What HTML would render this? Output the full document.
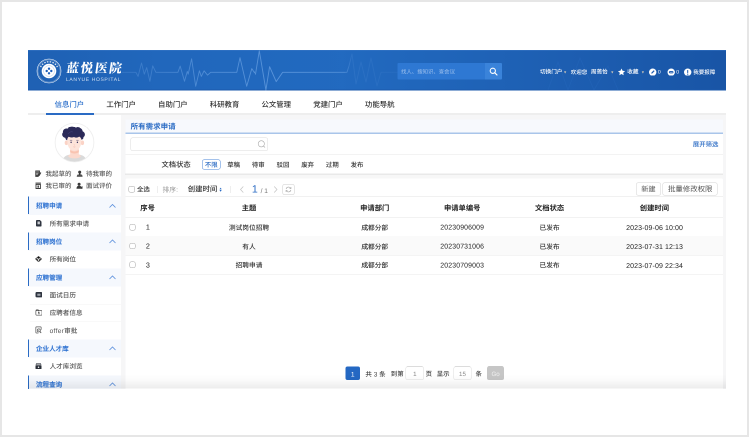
<!DOCTYPE html>
<html lang="zh-CN"><head><meta charset="utf-8"><title>蓝悦医院 - 所有需求申请</title>
<style>
html,body{margin:0;padding:0;}
body{width:749px;height:437px;overflow:hidden;background:#fff;position:relative;font-family:"Liberation Sans","Noto Sans CJK SC",sans-serif;}
.frame{position:absolute;left:0;top:0;width:749px;height:437px;box-sizing:border-box;border:2px solid #e6e6e6;}
.shot{position:absolute;left:28px;top:50px;width:698px;height:338.7px;overflow:hidden;background:#f6f6f7;}
.pg{position:absolute;left:-28px;top:-50px;width:1498px;height:874px;transform:scale(0.5);transform-origin:0 0;will-change:transform;}
.a{position:absolute;display:block;}
.t{position:absolute;white-space:nowrap;line-height:1;text-rendering:geometricPrecision;font-weight:500;}
</style></head><body>
<div class="frame"></div>
<div class="shot"><div class="pg">
<div class="a" style="left:56px;top:100px;width:1396px;height:81.4px;background:linear-gradient(90deg,#1f61b4 0%,#2167bc 18%,#226ac0 45%,#1f62b6 68%,#1955a6 100%);border-top:1.2px solid #3a77c6;border-bottom:2.4px solid #1b59ac;box-sizing:border-box;"></div>
<svg class="a" style="left:56.00px;top:100.00px" width="1396.00" height="81.00" viewBox="0 0 698 40.5">
<defs><linearGradient id="eg" x1="94" y1="0" x2="372" y2="0" gradientUnits="userSpaceOnUse">
<stop offset="0" stop-color="#7fb2ee" stop-opacity="0.22"/><stop offset="0.3" stop-color="#7fb2ee" stop-opacity="0.5"/><stop offset="0.6" stop-color="#7fb2ee" stop-opacity="0.6"/><stop offset="0.8" stop-color="#7fb2ee" stop-opacity="0.5"/><stop offset="0.825" stop-color="#7fb2ee" stop-opacity="0.12"/><stop offset="1" stop-color="#7fb2ee" stop-opacity="0.07"/></linearGradient></defs>
<polyline points="94.0,22.3 107.9,22.3 110.1,26.4 113.5,13.0 116.3,24.2 118.7,17.6 121.9,31.3 124.7,15.8 127.9,22.3 149.9,22.3 152.2,16.1 156.5,31.3 159.3,21.4 160.2,24.2 163.6,8.8 167.7,36.3 171.4,20.8 173.3,26.4 176.1,20.8 179.5,25.1 182.7,22.3 208.8,22.3 212.0,7.7 218.7,36.3 223.8,18.6 227.5,24.2 231.3,0.8 237.9,40.0 241.6,16.7 248.2,31.6 254.7,22.3 319.0,22.3 321.0,16.0 324.0,4.0 328.0,34.0 333.0,12.0 338.0,32.0 343.0,8.0 349.0,36.0 353.0,22.3 372.0,22.3" fill="none" stroke="url(#eg)" stroke-width="0.9" stroke-linejoin="round"/>
<polyline points="520,40 530,12 540,40 552,8 566,40 580,16 590,40" fill="none" stroke="#3a7bd0" stroke-opacity="0.18" stroke-width="0.8"/>
</svg>
<svg class="a" style="left:71.80px;top:115.60px" width="52.00" height="52.00" viewBox="-13 -13 26 26">
<circle r="12" fill="none" stroke="#fff" stroke-width="0.550" opacity="0.950"/>
<circle r="11.100" fill="none" stroke="#fff" stroke-width="0.400" opacity="0.600"/>
<path d="M-8.43 -3.93A9.3 9.3 0 0 1 8.43 -3.93" fill="none" stroke="#fff" stroke-width="1.300" stroke-dasharray="1.500 1.300" opacity="0.850"/>
<circle r="7.300" fill="#fff"/>
<circle r="5.400" fill="none" stroke="#2468c3" stroke-width="0.350" opacity="0.550"/>
<g fill="#1d5fbb"><circle cx="0" cy="-2.300" r="1.200"/><circle cx="0" cy="2.300" r="1.200"/><circle cx="-2.300" cy="0" r="1.200"/><circle cx="2.300" cy="0" r="1.200"/></g>
<circle r="0.800" fill="#fff"/>
</svg>
<div class="t " style="top:123.2px;font-size:25.2px;color:#fff;left:130.6px;font-family:'Noto Serif CJK SC',serif;font-weight:900;letter-spacing:3.4px;transform:skewX(-8deg);transform-origin:0 100%;">蓝悦医院</div>
<div class="t " style="top:155px;font-size:10px;color:rgba(255,255,255,.78);left:132px;letter-spacing:1.24px;font-weight:400;">LANYUE HOSPITAL</div>
<div class="a" style="left:795px;top:126.4px;width:175px;height:32.8px;background:#2e78d3;border-radius:2px 0 0 2px;"></div>
<div class="a" style="left:970px;top:126.4px;width:34px;height:32.8px;background:#3a83da;border-radius:0 2px 2px 0;"></div>
<div class="t " style="top:139px;font-size:10.8px;color:#8db6ea;left:802px;">找人、搜知识、查会议</div>
<svg class="a" style="left:978.00px;top:134.00px" width="18.00" height="18.00" viewBox="0 0 9 9"><circle cx="3.8" cy="3.8" r="2.6" fill="none" stroke="#fff" stroke-width="1.1"/><path d="M5.7 5.7L8 8" stroke="#fff" stroke-width="1.2" stroke-linecap="round"/></svg>
<div class="t " style="top:139.4px;font-size:11.2px;color:#fff;left:1080px;font-weight:500;">切换门户</div>
<div class="t " style="top:141.2px;font-size:7.6px;color:#d6cbb8;left:1126.6px;">▼</div>
<div class="t " style="top:139.5px;font-size:11px;color:#fff;left:1141.4px;font-weight:500;">欢迎您</div>
<div class="t " style="top:139.4px;font-size:11.2px;color:#fff;left:1181.8px;font-weight:500;">周蔫怡</div>
<div class="t " style="top:141.2px;font-size:7.6px;color:#d6cbb8;left:1220.8px;">▼</div>
<svg class="a" style="left:1235.20px;top:136.00px" width="16.00" height="16.00" viewBox="0 0 24 24"><path fill="#fff" d="M12 1.5l3.2 6.9 7.5.9-5.6 5.1 1.5 7.4L12 18.1l-6.6 3.7 1.5-7.4L1.3 9.3l7.5-.9z"/></svg>
<div class="t " style="top:139.4px;font-size:11.2px;color:#fff;left:1254.6px;font-weight:500;">收藏</div>
<div class="t " style="top:141.2px;font-size:7.6px;color:#d6cbb8;left:1282px;">▼</div>
<svg class="a" style="left:1298.00px;top:136.60px" width="14.80" height="14.80" viewBox="0 0 10 10"><circle cx="5" cy="5" r="5" fill="#fff"/><path d="M3 7l.4-1.6L6.4 2.4l1.2 1.2L4.6 6.6z" fill="#1f5db3"/></svg>
<div class="t " style="top:139.5px;font-size:10.2px;color:#fff;left:1315.8px;font-weight:400;">0</div>
<svg class="a" style="left:1334.80px;top:136.60px" width="14.80" height="14.80" viewBox="0 0 10 10"><circle cx="5" cy="5" r="5" fill="#fff"/><rect x="1.900" y="3.400" width="6.200" height="3.200" rx="1.600" fill="#1f5db3"/><circle cx="3.700" cy="5" r="0.500" fill="#fff"/><circle cx="5" cy="5" r="0.500" fill="#fff"/><circle cx="6.300" cy="5" r="0.500" fill="#fff"/></svg>
<div class="t " style="top:139.5px;font-size:10.2px;color:#fff;left:1352.6px;font-weight:400;">0</div>
<svg class="a" style="left:1367.80px;top:136.60px" width="14.80" height="14.80" viewBox="0 0 10 10"><circle cx="5" cy="5" r="5" fill="#fff"/><rect x="4.3" y="2" width="1.4" height="4" rx="0.5" fill="#1f5db3"/><circle cx="5" cy="7.6" r="0.8" fill="#1f5db3"/></svg>
<div class="t " style="top:139.5px;font-size:11px;color:#fff;left:1386.4px;font-weight:500;">我要报障</div>
<div class="a" style="left:56px;top:181.4px;width:1396px;height:44.6px;background:#fff;"></div>
<div class="a" style="left:56px;top:226px;width:1396px;height:4px;background:#eeeeee;"></div>
<div class="a" style="left:91.6px;top:226px;width:96.4px;height:4px;background:#2a6bc4;"></div>
<div class="t " style="top:203.4px;font-size:14.8px;color:#2f72cc;left:109.2px;">信息门户</div>
<div class="t " style="top:203.4px;font-size:14.8px;color:#333;left:212.64px;">工作门户</div>
<div class="t " style="top:203.4px;font-size:14.8px;color:#333;left:316.08px;">自助门户</div>
<div class="t " style="top:203.4px;font-size:14.8px;color:#333;left:419.52px;">科研教育</div>
<div class="t " style="top:203.4px;font-size:14.8px;color:#333;left:522.96px;">公文管理</div>
<div class="t " style="top:203.4px;font-size:14.8px;color:#333;left:626.4px;">党建门户</div>
<div class="t " style="top:203.4px;font-size:14.8px;color:#333;left:729.84px;">功能导航</div>
<div class="a" style="left:56px;top:230px;width:186.4px;height:548px;background:#fff;"></div>
<svg class="a" style="left:109.20px;top:245.20px" width="80.00" height="80.00" viewBox="-20 -20 40 40">
<defs><clipPath id="av"><circle r="19.100"/></clipPath></defs>
<circle r="19.400" fill="#fff" stroke="#ededed" stroke-width="0.800"/>
<g clip-path="url(#av)">
<path d="M-12.500 20C-12 14.500-8 12.300-4 12h8c4 .3 8 2.500 8.500 8z" fill="#dadada"/>
<ellipse cx="0" cy="13.600" rx="6.200" ry="2.300" fill="#fcd9cd"/>
<path d="M-4.300 6h8.600v7.300c0 2.300-8.600 2.300-8.600 0z" fill="#fcd9cd"/>
<path d="M-4.300 7.500c2.600 2 6 2 8.600 0v2.300c-2.600 1.600-6 1.600-8.600 0z" fill="#f9c3b0"/>
<ellipse cx="-8.100" cy="0.300" rx="1.700" ry="2.300" fill="#fbd3c6"/><ellipse cx="7.900" cy="0.300" rx="1.700" ry="2.300" fill="#fbd3c6"/>
<path d="M-7.100 -6h13.800v5.500c0 5-3.200 8.700-6.900 8.700s-6.900-3.700-6.900-8.700z" fill="#fde4da"/>
<path d="M-7.300 -2.200C-8.500 -2.600-9.300 -3.800-9 -5c-3-.6-4.300-3.900-2.500-6.200-.6-3 2.200-5.200 4.800-4.300C-5.300 -18.300-1 -18.600 1.200 -16.300c3.300-1.400 6.800 .7 6.900 3.800 2.700 1.300 3.100 5 .8 6.700 .3 1.400-.6 2.700-2 3-.1-1.700-.9-3-2.200-3.600-1.500 1.300-3.600 1.500-5.200 .4-1.700 .9-3.800 .8-5.300-.2-1 .8-1.500 2.300-1.500 4z" fill="#2b2a58" transform="translate(0,-0.27) scale(1,0.878)"/>
<path d="M-6.500 -8.500c1-1.800 3-2.600 4.800-2" fill="none" stroke="#4a4a80" stroke-width="0.500"/>
<ellipse cx="-3.400" cy="-0.200" rx="0.650" ry="0.800" fill="#3a3560"/><ellipse cx="2.900" cy="-0.200" rx="0.650" ry="0.800" fill="#3a3560"/>
<path d="M-4.600 -2.300h2.300M1.800 -2.300h2.300" stroke="#3a3560" stroke-width="0.450"/>
<path d="M-0.500 1.800q.3 1 .5 1.200" stroke="#f3b6a6" stroke-width="0.500" fill="none"/><path d="M-1.100 4.300q.9 .6 1.900 0" stroke="#f0a89a" stroke-width="0.500" fill="none"/>
</g></svg>
<svg class="a" style="left:70.40px;top:341.00px" width="12.80" height="12.80" viewBox="0 0 6.4 6.4"><path d="M0.300 0h4.600v2.600l-1.300 2.300v1.500H0.300z" fill="#3a3a3a"/><path d="M1.100 1.500h2.800M1.100 2.900h2.300M1.100 4.300h1.800" stroke="#fff" stroke-width="0.500"/><path d="M5.300 1.700l1 .6-1.700 3-1.100 .5 .1-1.200z" fill="#3a3a3a"/></svg>
<div class="t " style="top:340.5px;font-size:13px;color:#585858;left:91px;">我起草的</div>
<svg class="a" style="left:152.60px;top:341.00px" width="12.80" height="12.80" viewBox="0 0 6.4 6.4"><circle cx="3.200" cy="1.600" r="1.500" fill="#3a3a3a"/><path d="M2.600 2.600h1.200l.3 1.500h1.300l.7 1.300H0.300L1 4.100h1.300z" fill="#3a3a3a"/><rect x="0.300" y="5.700" width="5.800" height="0.700" fill="#3a3a3a"/></svg>
<div class="t " style="top:340.5px;font-size:13px;color:#585858;left:172px;">待我审的</div>
<svg class="a" style="left:70.40px;top:365.20px" width="12.80" height="12.80" viewBox="0 0 6.4 6.4"><rect x="0.500" y="0.100" width="5.400" height="1.100" fill="#3a3a3a"/><path d="M1 1.900h4.400v4.100H1z" fill="none" stroke="#3a3a3a" stroke-width="0.900"/><rect x="2.500" y="3" width="1.400" height="2.200" fill="#3a3a3a"/></svg>
<div class="t " style="top:364.9px;font-size:13px;color:#585858;left:91px;">我已审的</div>
<svg class="a" style="left:152.60px;top:365.20px" width="12.80" height="12.80" viewBox="0 0 6.4 6.4"><circle cx="2.600" cy="1.700" r="1.500" fill="#3a3a3a"/><path d="M0 6.300c0-2.200 1.100-3 2.600-3s2.600 .8 2.600 3z" fill="#3a3a3a"/><path d="M4.600 4.400l1.700-.9v2.800H4.600z" fill="#3a3a3a"/></svg>
<div class="t " style="top:364.9px;font-size:13px;color:#585858;left:172px;">面试评价</div>
<div class="a" style="left:56px;top:393.2px;width:186.4px;height:36.4px;background:#f5f8fd;"></div>
<div class="a" style="left:56px;top:393.2px;width:2.2px;height:35.2px;background:#2a6bc4;"></div>
<div class="t " style="top:405.44px;font-size:13.1px;color:#2b70d1;left:72px;font-weight:500;-webkit-text-stroke:0.3px #2b70d1;">招聘申请</div>
<svg class="a" style="left:217.40px;top:403.60px" width="16.00" height="16.00" viewBox="0 0 8 8"><path d="M1 5.500L4 2.500 7 5.500" fill="none" stroke="#5b8fdc" stroke-width="0.800"/></svg>
<svg class="a" style="left:71.80px;top:439.84px" width="11.20" height="13.00" viewBox="0 0 5.6 6.5"><path d="M0.900 0H3.900L5.600 1.700V5.600a.9 .9 0 0 1-.9 .9H0.900a.9 .9 0 0 1-.9-.9V0.900a.9 .9 0 0 1 .9-.9z" fill="#2f3540"/><rect x="1.500" y="1.500" width="2.400" height="2.800" fill="#c9ccd1"/></svg>
<div class="t " style="top:440.64px;font-size:13.2px;color:#555;left:99.2px;">所有需求申请</div>
<div class="a" style="left:56px;top:464.9px;width:186.4px;height:36.4px;background:#f5f8fd;"></div>
<div class="a" style="left:56px;top:464.9px;width:2.2px;height:35.2px;background:#2a6bc4;"></div>
<div class="t " style="top:477.14px;font-size:13.1px;color:#2b70d1;left:72px;font-weight:500;-webkit-text-stroke:0.3px #2b70d1;">招聘岗位</div>
<svg class="a" style="left:217.40px;top:475.30px" width="16.00" height="16.00" viewBox="0 0 8 8"><path d="M1 5.500L4 2.500 7 5.500" fill="none" stroke="#5b8fdc" stroke-width="0.800"/></svg>
<svg class="a" style="left:70.30px;top:511.74px" width="14.20" height="12.60" viewBox="0 0 7.1 6.3"><path d="M3.550 0L7.100 2.900 3.550 6.300 0 2.900z" fill="#3a3a3a"/><path d="M3.550 3.300V5.400M3.550 3.300L1.700 2.300M3.550 3.300L5.400 2.300" stroke="#fff" stroke-width="0.650" fill="none"/><circle cx="3.550" cy="1.450" r="0.750" fill="#111"/></svg>
<div class="t " style="top:512.34px;font-size:13.2px;color:#555;left:99.2px;">所有岗位</div>
<div class="a" style="left:56px;top:536.6px;width:186.4px;height:36.4px;background:#f5f8fd;"></div>
<div class="a" style="left:56px;top:536.6px;width:2.2px;height:35.2px;background:#2a6bc4;"></div>
<div class="t " style="top:548.86px;font-size:13.1px;color:#2b70d1;left:72px;font-weight:500;-webkit-text-stroke:0.3px #2b70d1;">应聘管理</div>
<svg class="a" style="left:217.40px;top:547.00px" width="16.00" height="16.00" viewBox="0 0 8 8"><path d="M1 5.500L4 2.500 7 5.500" fill="none" stroke="#5b8fdc" stroke-width="0.800"/></svg>
<svg class="a" style="left:70.60px;top:584.34px" width="13.60" height="10.80" viewBox="0 0 6.8 5.4"><rect x="0" y="0" width="6.800" height="5.400" rx="1.200" fill="#2f3540"/><rect x="1.800" y="1.700" width="3.200" height="2.100" fill="#9ea3ab"/></svg>
<div class="t " style="top:584.04px;font-size:13.2px;color:#555;left:99.2px;">面试日历</div>
<div class="a" style="left:60px;top:607.8px;width:182.4px;height:1px;background:#f3f3f3;"></div>
<svg class="a" style="left:70.50px;top:618.94px" width="13.80" height="12.20" viewBox="0 0 6.9 6.1"><rect x="0.350" y="1" width="6.200" height="4.750" rx="1" fill="none" stroke="#555" stroke-width="0.700"/><path d="M0.600 1.300V0.900a.5 .5 0 0 1 .5-.5h1.500l.7 .8" fill="none" stroke="#444" stroke-width="0.800"/><rect x="3" y="2.300" width="0.900" height="2.500" fill="#333"/><rect x="2.500" y="2.300" width="1" height="0.700" fill="#333"/></svg>
<div class="t " style="top:619.34px;font-size:13.2px;color:#555;left:99.2px;">应聘者信息</div>
<div class="a" style="left:60px;top:643.1px;width:182.4px;height:1px;background:#f3f3f3;"></div>
<svg class="a" style="left:71.36px;top:653.44px" width="12.10" height="13.80" viewBox="0 0 6.05 6.9"><path d="M5.650 3.300V0.950a.6 .6 0 0 0-.6-.6H0.950a.6 .6 0 0 0-.6 .6V5.900a.6 .6 0 0 0 .6 .6H2.900" fill="none" stroke="#555" stroke-width="0.700"/><circle cx="3.300" cy="3.900" r="1.550" fill="none" stroke="#555" stroke-width="0.700"/><path d="M4.400 5L5.700 6.500" stroke="#444" stroke-width="0.800"/><circle cx="3.300" cy="3.900" r="0.450" fill="#555"/></svg>
<div class="t " style="top:654.64px;font-size:13.2px;color:#555;left:99.2px;"><span style="letter-spacing:0.6px">offer</span>审批</div>
<div class="a" style="left:56px;top:678.9px;width:186.4px;height:36.4px;background:#f5f8fd;"></div>
<div class="a" style="left:56px;top:678.9px;width:2.2px;height:35.2px;background:#2a6bc4;"></div>
<div class="t " style="top:691.14px;font-size:13.1px;color:#2b70d1;left:72px;font-weight:500;-webkit-text-stroke:0.3px #2b70d1;">企业人才库</div>
<svg class="a" style="left:217.40px;top:689.30px" width="16.00" height="16.00" viewBox="0 0 8 8"><path d="M1 5.500L4 2.500 7 5.500" fill="none" stroke="#5b8fdc" stroke-width="0.800"/></svg>
<svg class="a" style="left:71.36px;top:725.94px" width="12.10" height="12.20" viewBox="0 0 6.05 6.1"><path d="M0.800 0H5.250L6.050 2.200H0z" fill="#6d7178"/><rect x="1.300" y="0.800" width="3.450" height="0.600" fill="#e8e8e8"/><rect x="0" y="2.400" width="6.050" height="3.700" rx="0.600" fill="#2a2f38"/><circle cx="3.020" cy="4.200" r="0.750" fill="#fff"/></svg>
<div class="t " style="top:726.34px;font-size:13.2px;color:#555;left:99.2px;">人才库浏览</div>
<div class="a" style="left:56px;top:750.6px;width:186.4px;height:36.4px;background:#f5f8fd;"></div>
<div class="a" style="left:56px;top:750.6px;width:2.2px;height:35.2px;background:#2a6bc4;"></div>
<div class="t " style="top:762.84px;font-size:13.1px;color:#2b70d1;left:72px;font-weight:500;-webkit-text-stroke:0.3px #2b70d1;">流程查询</div>
<svg class="a" style="left:217.40px;top:761.00px" width="16.00" height="16.00" viewBox="0 0 8 8"><path d="M1 5.500L4 2.500 7 5.500" fill="none" stroke="#5b8fdc" stroke-width="0.800"/></svg>
<svg class="a" style="left:71.36px;top:797.64px" width="12.10" height="12.20" viewBox="0 0 6.05 6.1"><path d="M0.800 0H5.250L6.050 2.200H0z" fill="#6d7178"/><rect x="1.300" y="0.800" width="3.450" height="0.600" fill="#e8e8e8"/><rect x="0" y="2.400" width="6.050" height="3.700" rx="0.600" fill="#2a2f38"/><circle cx="3.020" cy="4.200" r="0.750" fill="#fff"/></svg>
<div class="t " style="top:798.04px;font-size:13.2px;color:#555;left:99.2px;">我的流程</div>
<div class="a" style="left:251.2px;top:238.6px;width:1194.8px;height:26.2px;background:#f7f9fd;"></div>
<div class="t " style="top:246.1px;font-size:15px;color:#2a6bc4;left:261.2px;font-weight:700;">所有需求申请</div>
<div class="a" style="left:251.2px;top:264.8px;width:1194.8px;height:2.8px;background:#a9c5ea;"></div>
<div class="a" style="left:251.2px;top:267.6px;width:1194.8px;height:41.2px;background:#fff;"></div>
<div class="a" style="left:260.6px;top:274.6px;width:275.4px;height:27.2px;background:#fff;border:1.2px solid #dcdcdc;border-radius:4px;box-sizing:border-box;"></div>
<svg class="a" style="left:514.00px;top:279.00px" width="18.00" height="18.00" viewBox="0 0 9 9"><circle cx="4.300" cy="4.300" r="3.100" fill="none" stroke="#aaa" stroke-width="0.600"/><path d="M6.500 6.500L8 8" stroke="#aaa" stroke-width="0.600"/></svg>
<div class="t " style="top:282.6px;font-size:12.8px;color:#2a6bc4;left:1385.6px;font-weight:500;">展开筛选</div>
<div class="a" style="left:251.2px;top:308.8px;width:1194.8px;height:1px;background:#e8e8e8;"></div>
<div class="a" style="left:251.2px;top:309.8px;width:1194.8px;height:37.8px;background:#fff;"></div>
<div class="t " style="top:322.9px;font-size:14.6px;color:#333;left:323px;">文档状态</div>
<div class="a" style="left:404.4px;top:318.6px;width:36.4px;height:20.8px;border:1.6px solid #4a86d8;border-radius:4px;box-sizing:border-box;background:#fff;"></div>
<div class="t " style="top:323.8px;font-size:12.8px;color:#2a6bc4;left:222.6px;width:400px;text-align:center;">不限</div>
<div class="t " style="top:323.8px;font-size:12.8px;color:#333;left:267.2px;width:400px;text-align:center;">草稿</div>
<div class="t " style="top:323.8px;font-size:12.8px;color:#333;left:316.56px;width:400px;text-align:center;">待审</div>
<div class="t " style="top:323.8px;font-size:12.8px;color:#333;left:365.92px;width:400px;text-align:center;">驳回</div>
<div class="t " style="top:323.8px;font-size:12.8px;color:#333;left:415.28px;width:400px;text-align:center;">废弃</div>
<div class="t " style="top:323.8px;font-size:12.8px;color:#333;left:464.64px;width:400px;text-align:center;">过期</div>
<div class="t " style="top:323.8px;font-size:12.8px;color:#333;left:514px;width:400px;text-align:center;">发布</div>
<div class="a" style="left:251.2px;top:347.4px;width:1194.8px;height:2.4px;background:repeating-linear-gradient(90deg,#dadada 0 2px,#f8f8f8 2px 4px);"></div>
<div class="a" style="left:251.2px;top:350px;width:1194.8px;height:7.4px;background:#f7f7f7;"></div>
<div class="a" style="left:251.2px;top:357.4px;width:1194.8px;height:37px;background:#fff;border-radius:3px 3px 0 0;"></div>
<div class="a" style="left:257px;top:372.2px;width:12.8px;height:12.8px;border:1.5px solid #a2a2a2;border-radius:3.6px;box-sizing:border-box;background:#fff;"></div>
<div class="t " style="top:373.4px;font-size:12.8px;color:#333;left:274px;">全选</div>
<div class="a" style="left:313.6px;top:371.6px;width:1px;height:14px;background:#ddd;"></div>
<div class="t " style="top:373px;font-size:13.6px;color:#999;left:325px;font-weight:400;">排序:</div>
<div class="t " style="top:372.4px;font-size:14.8px;color:#333;left:375.4px;">创建时间</div>
<svg class="a" style="left:438.80px;top:374.80px" width="4.40" height="8.80" viewBox="0 0 2.600 5"><path d="M1.300 0L2.600 2.100H0z M1.300 5L2.600 2.900H0z" fill="#2a6bc4"/></svg>
<div class="a" style="left:461.4px;top:371.6px;width:1px;height:14px;background:#ddd;"></div>
<svg class="a" style="left:478.00px;top:370.60px" width="12.00" height="16.00" viewBox="0 0 6 8"><path d="M4.300 1L1.500 4l2.800 3" fill="none" stroke="#c4c4c4" stroke-width="0.700"/></svg>
<div class="t " style="top:367.8px;font-size:21.2px;color:#2a6bc4;left:503.8px;font-weight:400;">1</div>
<div class="t " style="top:375px;font-size:13.2px;color:#777;left:521.2px;font-weight:400;">/ 1</div>
<svg class="a" style="left:545.20px;top:370.60px" width="12.00" height="16.00" viewBox="0 0 6 8"><path d="M1.700 1L4.500 4 1.700 7" fill="none" stroke="#c4c4c4" stroke-width="0.700"/></svg>
<div class="a" style="left:565px;top:367.6px;width:24px;height:22px;border:1.2px solid #ccc;border-radius:4px;box-sizing:border-box;background:#fff;"></div>
<svg class="a" style="left:569.00px;top:370.60px" width="16.00" height="16.00" viewBox="0 0 8 8"><path d="M1.600 3.500A2.500 2.500 0 0 1 6.200 2.800M6.400 4.500A2.500 2.500 0 0 1 1.800 5.200" fill="none" stroke="#a8a8a8" stroke-width="0.600"/><path d="M6.500 1.600v1.500H5M1.500 6.400V4.900H3" fill="none" stroke="#a8a8a8" stroke-width="0.600"/></svg>
<div class="a" style="left:1272px;top:365.2px;width:49.6px;height:25.6px;border:1.2px solid #d4d4d4;border-radius:4px;box-sizing:border-box;background:#fff;"></div>
<div class="t " style="top:372.2px;font-size:14.4px;color:#555;left:1096.8px;width:400px;text-align:center;font-weight:400;">新建</div>
<div class="a" style="left:1325.4px;top:365.2px;width:110px;height:25.6px;border:1.2px solid #d4d4d4;border-radius:4px;box-sizing:border-box;background:#fff;"></div>
<div class="t " style="top:372px;font-size:14.8px;color:#555;left:1180.4px;width:400px;text-align:center;font-weight:400;">批量修改权限</div>
<div class="a" style="left:251.2px;top:394.4px;width:1194.8px;height:383.6px;background:#fff;"></div>
<div class="a" style="left:251.2px;top:393px;width:1194.8px;height:1.6px;background:#e4e4e4;"></div>
<div class="a" style="left:251.2px;top:433.8px;width:1194.8px;height:1.4px;background:#e6e6e6;"></div>
<div class="t " style="top:409.5px;font-size:14.6px;color:#222;left:95.2px;width:400px;text-align:center;font-weight:700;">序号</div>
<div class="t " style="top:409.5px;font-size:14.6px;color:#222;left:298px;width:400px;text-align:center;font-weight:700;">主题</div>
<div class="t " style="top:409.5px;font-size:14.6px;color:#222;left:549.4px;width:400px;text-align:center;font-weight:700;">申请部门</div>
<div class="t " style="top:409.5px;font-size:14.6px;color:#222;left:724.4px;width:400px;text-align:center;font-weight:700;">申请单编号</div>
<div class="t " style="top:409.5px;font-size:14.6px;color:#222;left:899.2px;width:400px;text-align:center;font-weight:700;">文档状态</div>
<div class="t " style="top:409.5px;font-size:14.6px;color:#222;left:1108.8px;width:400px;text-align:center;font-weight:700;">创建时间</div>
<div class="a" style="left:251.2px;top:471.96px;width:1194.8px;height:1px;background:#eaeaea;"></div>
<div class="a" style="left:258.6px;top:447.74px;width:12.8px;height:12.8px;border:1.5px solid #a2a2a2;border-radius:3.6px;box-sizing:border-box;background:#fff;"></div>
<div class="t " style="top:448.14px;font-size:14.4px;color:#222;left:95.8px;width:400px;text-align:center;">1</div>
<div class="t " style="top:448.64px;font-size:13.4px;color:#333;left:298px;width:400px;text-align:center;">测试岗位招聘</div>
<div class="t " style="top:448.64px;font-size:13.4px;color:#333;left:549.4px;width:400px;text-align:center;">成都分部</div>
<div class="t " style="top:448.44px;font-size:13.8px;color:#222;left:724.4px;width:400px;text-align:center;letter-spacing:0.3px;">20230906009</div>
<div class="t " style="top:448.64px;font-size:13.4px;color:#333;left:899.2px;width:400px;text-align:center;">已发布</div>
<div class="t " style="top:448.34px;font-size:14px;color:#222;left:1109.2px;width:400px;text-align:center;letter-spacing:0.2px;">2023-09-06 10:00</div>
<div class="a" style="left:251.2px;top:472.46px;width:1194.8px;height:37.86px;background:#fafafa;"></div>
<div class="a" style="left:251.2px;top:509.82px;width:1194.8px;height:1px;background:#eaeaea;"></div>
<div class="a" style="left:258.6px;top:485.6px;width:12.8px;height:12.8px;border:1.5px solid #a2a2a2;border-radius:3.6px;box-sizing:border-box;background:#fff;"></div>
<div class="t " style="top:486px;font-size:14.4px;color:#222;left:95.8px;width:400px;text-align:center;">2</div>
<div class="t " style="top:486.5px;font-size:13.4px;color:#333;left:298px;width:400px;text-align:center;">有人</div>
<div class="t " style="top:486.5px;font-size:13.4px;color:#333;left:549.4px;width:400px;text-align:center;">成都分部</div>
<div class="t " style="top:486.3px;font-size:13.8px;color:#222;left:724.4px;width:400px;text-align:center;letter-spacing:0.3px;">20230731006</div>
<div class="t " style="top:486.5px;font-size:13.4px;color:#333;left:899.2px;width:400px;text-align:center;">已发布</div>
<div class="t " style="top:486.2px;font-size:14px;color:#222;left:1109.2px;width:400px;text-align:center;letter-spacing:0.2px;">2023-07-31 12:13</div>
<div class="a" style="left:251.2px;top:547.68px;width:1194.8px;height:1px;background:#eaeaea;"></div>
<div class="a" style="left:258.6px;top:523.46px;width:12.8px;height:12.8px;border:1.5px solid #a2a2a2;border-radius:3.6px;box-sizing:border-box;background:#fff;"></div>
<div class="t " style="top:523.86px;font-size:14.4px;color:#222;left:95.8px;width:400px;text-align:center;">3</div>
<div class="t " style="top:524.36px;font-size:13.4px;color:#333;left:298px;width:400px;text-align:center;">招聘申请</div>
<div class="t " style="top:524.36px;font-size:13.4px;color:#333;left:549.4px;width:400px;text-align:center;">成都分部</div>
<div class="t " style="top:524.16px;font-size:13.8px;color:#222;left:724.4px;width:400px;text-align:center;letter-spacing:0.3px;">20230709003</div>
<div class="t " style="top:524.36px;font-size:13.4px;color:#333;left:899.2px;width:400px;text-align:center;">已发布</div>
<div class="t " style="top:524.06px;font-size:14px;color:#222;left:1109.2px;width:400px;text-align:center;letter-spacing:0.2px;">2023-07-09 22:34</div>
<div class="a" style="left:691px;top:733.2px;width:28.8px;height:27.2px;background:#2468c3;border-radius:4px;"></div>
<div class="t " style="top:741.6px;font-size:13.2px;color:#fff;left:505.4px;width:400px;text-align:center;">1</div>
<div class="t " style="top:741.7px;font-size:13px;color:#444;left:730.8px;">共 3 条</div>
<div class="t " style="top:741.8px;font-size:12.8px;color:#444;left:781.6px;">到第</div>
<div class="a" style="left:811.2px;top:733.2px;width:36.8px;height:27.2px;border:1.2px solid #dcdcdc;border-radius:4px;box-sizing:border-box;background:#fff;"></div>
<div class="t " style="top:742px;font-size:12.4px;color:#888;left:629.6px;width:400px;text-align:center;">1</div>
<div class="t " style="top:741.8px;font-size:12.8px;color:#444;left:851.2px;">页</div>
<div class="t " style="top:741.8px;font-size:12.8px;color:#444;left:873.4px;">显示</div>
<div class="a" style="left:906.8px;top:733.2px;width:36.4px;height:27.2px;border:1.2px solid #dcdcdc;border-radius:4px;box-sizing:border-box;background:#fff;"></div>
<div class="t " style="top:742px;font-size:12.4px;color:#888;left:725px;width:400px;text-align:center;">15</div>
<div class="t " style="top:741.8px;font-size:12.8px;color:#444;left:951px;">条</div>
<div class="a" style="left:974px;top:733.2px;width:34.4px;height:27.2px;background:#c6c6c6;border-radius:4px;"></div>
<div class="t " style="top:742px;font-size:12.4px;color:#f2f2f2;left:791.2px;width:400px;text-align:center;">Go</div>
<div class="a" style="left:56px;top:749px;width:1396px;height:28.4px;background:linear-gradient(180deg,rgba(0,0,0,0) 0%,rgba(0,0,0,0.02) 40%,rgba(0,0,0,0.075) 100%);"></div>
</div></div>
</body></html>
